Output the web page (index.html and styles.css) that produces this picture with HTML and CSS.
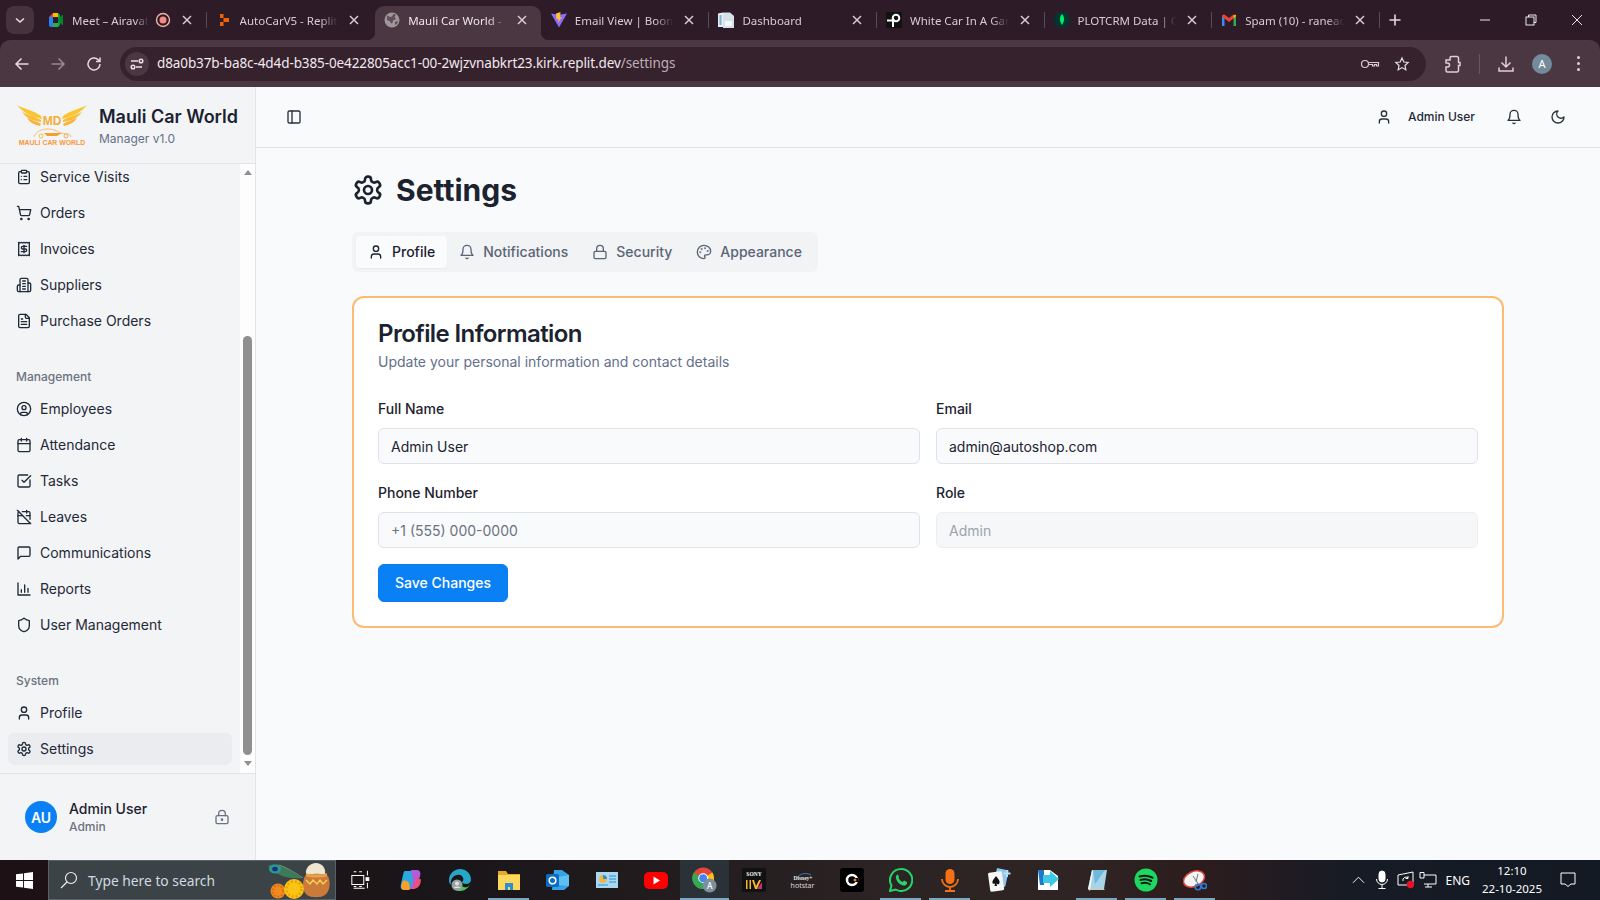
FILE: index.html
```html
<!DOCTYPE html>
<html lang="en">
<head>
<meta charset="utf-8">
<title>Mauli Car World - Settings</title>
<link rel="stylesheet" href="styles.css">
</head>
<body>
<svg class="defs" width="0" height="0" aria-hidden="true">
  <symbol id="i-clip" viewBox="0 0 24 24"><rect x="8" y="2" width="8" height="4" rx="1"/><path d="M16 4h2a2 2 0 0 1 2 2v14a2 2 0 0 1-2 2H6a2 2 0 0 1-2-2V6a2 2 0 0 1 2-2h2"/><path d="M12 11h4M12 16h4M8 11h.01M8 16h.01"/></symbol>
  <symbol id="i-cart" viewBox="0 0 24 24"><circle cx="8" cy="21" r="1"/><circle cx="19" cy="21" r="1"/><path d="M2.05 2.05h2l2.66 12.42a2 2 0 0 0 2 1.58h9.78a2 2 0 0 0 1.95-1.57l1.65-7.43H5.12"/></symbol>
  <symbol id="i-receipt" viewBox="0 0 24 24"><path d="M4 2v20l2-1 2 1 2-1 2 1 2-1 2 1 2-1 2 1V2l-2 1-2-1-2 1-2-1-2 1-2-1-2 1Z"/><path d="M16 8h-6a2 2 0 1 0 0 4h4a2 2 0 1 1 0 4H8"/><path d="M12 17.5v-11"/></symbol>
  <symbol id="i-building" viewBox="0 0 24 24"><path d="M6 22V4a2 2 0 0 1 2-2h8a2 2 0 0 1 2 2v18Z"/><path d="M6 12H4a2 2 0 0 0-2 2v6a2 2 0 0 0 2 2h2"/><path d="M18 9h2a2 2 0 0 1 2 2v9a2 2 0 0 1-2 2h-2"/><path d="M10 6h4M10 10h4M10 14h4M10 18h4"/></symbol>
  <symbol id="i-file" viewBox="0 0 24 24"><path d="M15 2H6a2 2 0 0 0-2 2v16a2 2 0 0 0 2 2h12a2 2 0 0 0 2-2V7Z"/><path d="M14 2v4a2 2 0 0 0 2 2h4"/><path d="M10 9H8M16 13H8M16 17H8"/></symbol>
  <symbol id="i-cuser" viewBox="0 0 24 24"><circle cx="12" cy="12" r="10"/><circle cx="12" cy="10" r="3"/><path d="M7 20.662V19a2 2 0 0 1 2-2h6a2 2 0 0 1 2 2v1.662"/></symbol>
  <symbol id="i-cal" viewBox="0 0 24 24"><path d="M8 2v4M16 2v4"/><rect x="3" y="4" width="18" height="18" rx="2"/><path d="M3 10h18"/></symbol>
  <symbol id="i-check" viewBox="0 0 24 24"><path d="M21 10.5V19a2 2 0 0 1-2 2H5a2 2 0 0 1-2-2V5a2 2 0 0 1 2-2h12.5"/><path d="m9 11 3 3L22 4"/></symbol>
  <symbol id="i-caloff" viewBox="0 0 24 24"><path d="M4.2 4.2A2 2 0 0 0 3 6v14a2 2 0 0 0 2 2h14a2 2 0 0 0 1.82-1.18"/><path d="M21 15.5V6a2 2 0 0 0-2-2H9.5"/><path d="M16 2v4M3 10h7M21 10h-5.5"/><path d="m2 2 20 20"/></symbol>
  <symbol id="i-msg" viewBox="0 0 24 24"><path d="M21 15a2 2 0 0 1-2 2H7l-4 4V5a2 2 0 0 1 2-2h14a2 2 0 0 1 2 2z"/></symbol>
  <symbol id="i-chart" viewBox="0 0 24 24"><path d="M3 3v18h18"/><path d="M18 17v-6M13 17V6M8 17v-4"/></symbol>
  <symbol id="i-shield" viewBox="0 0 24 24"><path d="M20 13c0 5-3.5 7.5-7.66 8.95a1 1 0 0 1-.67-.01C7.5 20.5 4 18 4 13V6a1 1 0 0 1 1-1c2 0 4.5-1.2 6.24-2.72a1.17 1.17 0 0 1 1.52 0C14.51 3.81 17 5 19 5a1 1 0 0 1 1 1z"/></symbol>
  <symbol id="i-user" viewBox="0 0 24 24"><path d="M19 21v-2a4 4 0 0 0-4-4H9a4 4 0 0 0-4 4v2"/><circle cx="12" cy="7" r="4"/></symbol>
  <symbol id="i-gear" viewBox="0 0 24 24"><path d="M12.22 2h-.44a2 2 0 0 0-2 2v.18a2 2 0 0 1-1 1.73l-.43.25a2 2 0 0 1-2 0l-.15-.08a2 2 0 0 0-2.73.73l-.22.38a2 2 0 0 0 .73 2.73l.15.1a2 2 0 0 1 1 1.72v.51a2 2 0 0 1-1 1.74l-.15.09a2 2 0 0 0-.73 2.73l.22.38a2 2 0 0 0 2.73.73l.15-.08a2 2 0 0 1 2 0l.43.25a2 2 0 0 1 1 1.73V20a2 2 0 0 0 2 2h.44a2 2 0 0 0 2-2v-.18a2 2 0 0 1 1-1.73l.43-.25a2 2 0 0 1 2 0l.15.08a2 2 0 0 0 2.73-.73l.22-.39a2 2 0 0 0-.73-2.73l-.15-.08a2 2 0 0 1-1-1.74v-.5a2 2 0 0 1 1-1.74l.15-.09a2 2 0 0 0 .73-2.73l-.22-.38a2 2 0 0 0-2.73-.73l-.15.08a2 2 0 0 1-2 0l-.43-.25a2 2 0 0 1-1-1.73V4a2 2 0 0 0-2-2z"/><circle cx="12" cy="12" r="3"/></symbol>
  <symbol id="i-lockk" viewBox="0 0 24 24"><circle cx="12" cy="16" r="1"/><rect x="3" y="10" width="18" height="12" rx="2"/><path d="M7 10V7a5 5 0 0 1 10 0v3"/></symbol>
  <symbol id="i-lock" viewBox="0 0 24 24"><rect x="3" y="11" width="18" height="11" rx="2"/><path d="M7 11V7a5 5 0 0 1 10 0v4"/></symbol>
  <symbol id="i-bell" viewBox="0 0 24 24"><path d="M6 8a6 6 0 0 1 12 0c0 7 3 9 3 9H3s3-2 3-9"/><path d="M10.3 21a1.94 1.94 0 0 0 3.4 0"/></symbol>
  <symbol id="i-moon" viewBox="0 0 24 24"><path d="M12 3a6 6 0 0 0 9 9 9 9 0 1 1-9-9Z"/></symbol>
  <symbol id="i-panel" viewBox="0 0 24 24"><rect x="3" y="3" width="18" height="18" rx="2"/><path d="M9 3v18"/></symbol>
  <symbol id="i-palette" viewBox="0 0 24 24"><circle cx="13.5" cy="6.5" r=".5"/><circle cx="17.5" cy="10.5" r=".5"/><circle cx="8.5" cy="7.5" r=".5"/><circle cx="6.5" cy="12.5" r=".5"/><path d="M12 2C6.5 2 2 6.5 2 12s4.5 10 10 10c.926 0 1.648-.746 1.648-1.688 0-.437-.18-.835-.437-1.125-.29-.289-.438-.652-.438-1.125a1.64 1.64 0 0 1 1.668-1.668h1.996c3.051 0 5.555-2.503 5.555-5.554C21.965 6.012 17.461 2 12 2z"/></symbol>
  <symbol id="i-x" viewBox="0 0 16 16"><path d="M4 4l8 8M12 4l-8 8"/></symbol>
</svg>

<div class="chrome">
  <div class="tabstrip">
    <button class="tab-search"><svg class="c-ico-sm" viewBox="0 0 16 16"><path d="M4 6.5l4 3.5 4-3.5"/></svg></button>
    <div class="tab">
      <svg class="fav" viewBox="0 0 16 16"><path d="M1 11h4v4H3a2 2 0 0 1-2-2z" fill="#1e88e5"/><path d="M1 5h4v6H1z" fill="#2684fc"/><path d="M5 1v4H1z" fill="#ea4335"/><path d="M5 1h5v4H5z" fill="#fbbc04"/><path d="M5 11h5v4H5z" fill="#34a853"/><path d="M5 5h5v6H5z" fill="#2d1b27"/><path d="M10 1v14l2-2V3z" fill="#00ac47"/><path d="M10 6.500l5-4v11l-5-4z" fill="#00832d"/></svg>
      <span class="tab-title short">Meet – Airavat Project</span>
      <svg class="rec" viewBox="0 0 16 16"><circle cx="8" cy="8" r="6.5" fill="none" stroke="#f3b2a8" stroke-width="1.4"/><circle cx="8" cy="8" r="3.5" fill="#f28b82"/></svg>
      <svg class="tab-x"><use href="#i-x"/></svg>
    </div>
    <span class="tab-sep on"></span>
    <div class="tab">
      <svg class="fav" viewBox="0 0 16 16"><path d="M4 2h3.5v4H4zM7.5 6H13v4H7.5zM4 10h3.5v4H4z" fill="#f26207"/></svg>
      <span class="tab-title">AutoCarV5 - Replit</span>
      <svg class="tab-x"><use href="#i-x"/></svg>
    </div>
    <span class="tab-sep"></span>
    <div class="tab active">
      <svg class="fav" viewBox="0 0 16 16"><circle cx="8" cy="8" r="7.5" fill="#a09699"/><path d="M3 3.5l3 1.5 2-.5L9.500 2 12 2.500 10.500 5 12 7 9 8.500 8 12 5.500 9 3 8z" fill="#5f4f58"/><path d="M11 10l3-1-1 3-2 1z" fill="#5f4f58"/></svg>
      <span class="tab-title">Mauli Car World - Replit</span>
      <svg class="tab-x"><use href="#i-x"/></svg>
    </div>
    <span class="tab-sep"></span>
    <div class="tab">
      <svg class="fav" viewBox="0 0 16 16"><path d="M0 1.500l8 1.200 8-1.200-8 14z" fill="#8f6cf5"/><path d="M9.500 0L5 1.500l.5 6 2-.5-.3 3.500L11 5l-2 .3z" fill="#ffc42e"/></svg>
      <span class="tab-title">Email View | Boomerang</span>
      <svg class="tab-x"><use href="#i-x"/></svg>
    </div>
    <span class="tab-sep on"></span>
    <div class="tab">
      <svg class="fav" viewBox="0 0 16 16"><path d="M0 1.500l5-1V15H0z" fill="#e8f0f6"/><path d="M5 .5h7l4 3.500V16H5z" fill="#d6e2ea"/><path d="M1.500 3h2v10h-2z" fill="#7fb0d0"/><path d="M7 9h7v5H7z" fill="#f5f8fa"/></svg>
      <span class="tab-title">Dashboard</span>
      <svg class="tab-x"><use href="#i-x"/></svg>
    </div>
    <span class="tab-sep on"></span>
    <div class="tab">
      <svg class="fav" viewBox="0 0 16 16"><rect width="16" height="16" fill="#111"/><path d="M1 8.500h8" stroke="#fff" stroke-width="2"/><circle cx="10" cy="6" r="3.300" fill="none" stroke="#fff" stroke-width="2"/><path d="M7 6v9" stroke="#fff" stroke-width="2"/></svg>
      <span class="tab-title">White Car In A Garage</span>
      <svg class="tab-x"><use href="#i-x"/></svg>
    </div>
    <span class="tab-sep on"></span>
    <div class="tab">
      <svg class="fav" viewBox="0 0 16 16"><circle cx="8" cy="8" r="8" fill="#023430"/><path d="M8 2c2.500 2.500 3 6.500 0 11-3-4.500-2.500-8.500 0-11z" fill="#00ed64"/></svg>
      <span class="tab-title">PLOTCRM Data | Cloud</span>
      <svg class="tab-x"><use href="#i-x"/></svg>
    </div>
    <span class="tab-sep on"></span>
    <div class="tab">
      <svg class="fav" viewBox="0 0 16 16"><path d="M1 14V4l2.500 2V14z" fill="#4285f4"/><path d="M12.500 14V6L15 4v10z" fill="#34a853"/><path d="M1 4.500C1 2.500 3 2 4 3l4 3 4-3c1-1 3-.5 3 1.500L8 10z" fill="#ea4335"/><path d="M12.500 6V3.500L15 2.800v1.700z" fill="#fbbc04"/></svg>
      <span class="tab-title">Spam (10) - raneadi</span>
      <svg class="tab-x"><use href="#i-x"/></svg>
    </div>
    <span class="tab-sep on"></span>
    <svg class="tab-plus" viewBox="0 0 16 16"><path d="M8 2.500v11M2.500 8h11"/></svg>
    <div class="win">
      <span class="win-btn"><svg viewBox="0 0 12 12"><path d="M1 6h10"/></svg></span>
      <span class="win-btn"><svg viewBox="0 0 12 12"><rect x="1" y="3" width="8" height="8"/><path d="M3.500 3V1H11v7.500H9"/></svg></span>
      <span class="win-btn"><svg viewBox="0 0 12 12"><path d="M1 1l10 10M11 1L1 11"/></svg></span>
    </div>
  </div>
  <div class="toolbar">
    <span class="tb-btn"><svg class="c-ico" viewBox="0 0 20 20"><path d="M16.500 10H4M9.500 4.500L4 10l5.500 5.500"/></svg></span>
    <span class="tb-btn dim"><svg class="c-ico" viewBox="0 0 20 20"><path d="M3.500 10H16M10.500 4.500L16 10l-5.500 5.500"/></svg></span>
    <span class="tb-btn"><svg class="c-ico" viewBox="0 0 20 20"><path d="M16 10a6 6 0 1 1-1.800-4.300L16 7.500M16 3.500v4h-4"/></svg></span>
    <div class="omni">
      <span class="site-btn"><svg class="c-ico-sm" viewBox="0 0 16 16"><path d="M2 5h7M13 11H7"/><circle cx="12" cy="5" r="1.800"/><circle cx="4" cy="11" r="1.800"/></svg></span>
      <span class="url">d8a0b37b-ba8c-4d4d-b385-0e422805acc1-00-2wjzvnabkrt23.kirk.replit.dev<span class="url-path">/settings</span></span>
      <svg class="c-ico omni-key" viewBox="0 0 20 20"><circle cx="5" cy="10" r="3.500"/><path d="M8.500 8.500h10v3.500h-2v-1.500h-2V12h-2v-1.500H8.500"/></svg>
      <svg class="c-ico omni-star" viewBox="0 0 20 20"><path d="M10 2.500l2.300 5 5.400.6-4 3.700 1.100 5.400L10 14.500l-4.800 2.700 1.100-5.400-4-3.700 5.400-.6z"/></svg>
    </div>
    <span class="tb-btn ext"><svg class="c-ico pink" viewBox="0 0 20 20"><path d="M3 6h4V4a1.500 1.500 0 0 1 1.500-1.500H14A1.500 1.500 0 0 1 15.500 4v4.500H17v3h-1.500v5A1.500 1.500 0 0 1 14 18H4.500A1.500 1.500 0 0 1 3 16.500v-3.500h1.500a2 2 0 0 0 0-4H3z"/></svg></span>
    <span class="tb-line"></span>
    <span class="tb-btn"><svg class="c-ico pink" viewBox="0 0 20 20"><path d="M10 2.500V13M5.500 8.500L10 13l4.500-4.500M3 13.500V17h14v-3.500"/></svg></span>
    <span class="tb-btn"><span class="prof">A</span></span>
    <span class="tb-btn"><span class="dots"><i></i><i></i><i></i></span></span>
  </div>
</div>

<div class="app">
  <aside class="sidebar">
    <div class="brand">
      <svg class="logo" viewBox="0 0 72 42">
        <g id="wing-l">
          <path d="M1 1C8 5 17 6 25 12l1 3C17 13 7 9 1 1z" fill="#fbc531"/>
          <path d="M6 8c6 3 12 4 19 8l0 2C17 17 10 14 6 8z" fill="#f9bd38"/>
          <path d="M11 14c5 2 9 3 14 6l-1 2c-5-1-10-3-13-8z" fill="#f8b43c"/>
        </g>
        <g transform="translate(72 0) scale(-1 1)">
          <path d="M1 1C8 5 17 6 25 12l1 3C17 13 7 9 1 1z" fill="#fbc531"/>
          <path d="M6 8c6 3 12 4 19 8l0 2C17 17 10 14 6 8z" fill="#f9bd38"/>
          <path d="M11 14c5 2 9 3 14 6l-1 2c-5-1-10-3-13-8z" fill="#f8b43c"/>
        </g>
        <text class="logo-md" x="36" y="21" text-anchor="middle">MD</text>
        <path d="M18 33c2-6 8-8 14-8 6 0 9 2 12 4l8 1c2 .5 3 2 3 3" fill="none" stroke="#f9b24e" stroke-width=".8"/>
        <path d="M28 29h18l-5 3H31z" fill="#f4a02e"/>
        <circle cx="25" cy="32" r="2" fill="none" stroke="#f4c04a" stroke-width="1"/>
        <circle cx="50" cy="32" r="2" fill="none" stroke="#f4a76a" stroke-width="1"/>
        <text class="logo-name" x="36" y="41" text-anchor="middle">MAULI CAR WORLD</text>
      </svg>
      <div class="brand-text">
        <div class="brand-title">Mauli Car World</div>
        <div class="brand-sub">Manager v1.0</div>
      </div>
    </div>
    <div class="side-scroll">
      <nav class="nav">
        <div class="nav-inner">
          <a class="nav-item"><svg class="ico"><use href="#i-clip"/></svg>Service Visits</a>
          <a class="nav-item"><svg class="ico"><use href="#i-cart"/></svg>Orders</a>
          <a class="nav-item"><svg class="ico"><use href="#i-receipt"/></svg>Invoices</a>
          <a class="nav-item"><svg class="ico"><use href="#i-building"/></svg>Suppliers</a>
          <a class="nav-item"><svg class="ico"><use href="#i-file"/></svg>Purchase Orders</a>
          <div class="nav-label">Management</div>
          <a class="nav-item"><svg class="ico"><use href="#i-cuser"/></svg>Employees</a>
          <a class="nav-item"><svg class="ico"><use href="#i-cal"/></svg>Attendance</a>
          <a class="nav-item"><svg class="ico"><use href="#i-check"/></svg>Tasks</a>
          <a class="nav-item"><svg class="ico"><use href="#i-caloff"/></svg>Leaves</a>
          <a class="nav-item"><svg class="ico"><use href="#i-msg"/></svg>Communications</a>
          <a class="nav-item"><svg class="ico"><use href="#i-chart"/></svg>Reports</a>
          <a class="nav-item"><svg class="ico"><use href="#i-shield"/></svg>User Management</a>
          <div class="nav-label">System</div>
          <a class="nav-item"><svg class="ico"><use href="#i-user"/></svg>Profile</a>
          <a class="nav-item active"><svg class="ico"><use href="#i-gear"/></svg>Settings</a>
        </div>
      </nav>
      <div class="sb">
        <span class="sb-up"></span>
        <span class="sb-thumb"></span>
        <span class="sb-down"></span>
      </div>
    </div>
    <div class="side-foot">
      <span class="avatar">AU</span>
      <div class="foot-text">
        <div class="foot-name">Admin User</div>
        <div class="foot-role">Admin</div>
      </div>
      <svg class="ico foot-lock"><use href="#i-lockk"/></svg>
    </div>
  </aside>

  <main class="main">
    <header class="topbar">
      <span class="icon-btn"><svg class="ico"><use href="#i-panel"/></svg></span>
      <div class="top-right">
        <svg class="ico"><use href="#i-user"/></svg>
        <span class="top-user">Admin User</span>
        <span class="icon-btn bell"><svg class="ico"><use href="#i-bell"/></svg></span>
        <span class="icon-btn"><svg class="ico"><use href="#i-moon"/></svg></span>
      </div>
    </header>
    <div class="content">
      <div class="page-title">
        <svg class="ico title-ico"><use href="#i-gear"/></svg>
        <h1>Settings</h1>
      </div>
      <div class="tabs">
        <span class="s-tab on"><svg class="ico"><use href="#i-user"/></svg>Profile</span>
        <span class="s-tab"><svg class="ico"><use href="#i-bell"/></svg>Notifications</span>
        <span class="s-tab"><svg class="ico"><use href="#i-lock"/></svg>Security</span>
        <span class="s-tab"><svg class="ico"><use href="#i-palette"/></svg>Appearance</span>
      </div>
      <section class="card">
        <h2>Profile Information</h2>
        <p class="card-desc">Update your personal information and contact details</p>
        <div class="form-grid">
          <label class="field"><span class="f-label">Full Name</span><input class="input" value="Admin User"></label>
          <label class="field"><span class="f-label">Email</span><input class="input" value="admin@autoshop.com"></label>
          <label class="field"><span class="f-label">Phone Number</span><input class="input" placeholder="+1 (555) 000-0000"></label>
          <label class="field"><span class="f-label">Role</span><input class="input off" placeholder="Admin" disabled></label>
        </div>
        <button class="save">Save Changes</button>
      </section>
    </div>
  </main>
</div>

<footer class="taskbar">
  <span class="start"><svg viewBox="0 0 18 18" width="17" height="17"><path d="M0 2.500l7.500-1V8.500H0zM8.500 1.300L18 0v8.500H8.500zM0 9.500h7.500v7L0 15.500zM8.500 9.500H18V18l-9.500-1.300z" fill="#fff"/></svg></span>
  <div class="search">
    <svg class="search-ico" viewBox="0 0 18 18"><circle cx="11" cy="7" r="5.500"/><path d="M7 11l-6 6"/></svg>
    <span class="search-text">Type here to search</span>
    <svg class="search-art" viewBox="0 0 68 38">
      <path d="M1 5c7-3 15-1 22 4 5 3 9 6 13 8-8 1-18 0-25-4C6 11 3 8 1 5z" fill="#3d7a5c"/>
      <path d="M12 4c6 2 14 6 24 13" fill="none" stroke="#8a9a8a" stroke-width=".7"/>
      <ellipse cx="8" cy="8" rx="6" ry="4.500" fill="#2a9a8a"/>
      <ellipse cx="8" cy="8" rx="2.800" ry="2.300" fill="#1a2c8a"/>
      <path d="M39 13c-1-6 4-11 10-11s10 5 9 11z" fill="#efe6cf"/>
      <path d="M38 15c3-3 20-3 23 0 3 6 2 15-3 19-4 3-14 3-18 0-5-4-5-13-2-19z" fill="#cc7a3a"/>
      <path d="M39 12c4 2 17 2 21 0v3c-4 2-17 2-21 0z" fill="#e8a347"/>
      <path d="M39 19l4 4 3-4 4 4 3-4 3 4 4-4" fill="none" stroke="#f7d35a" stroke-width="1.300"/>
      <circle cx="11" cy="30" r="7.500" fill="#f08a1d"/>
      <circle cx="11" cy="30" r="5.500" fill="none" stroke="#d96f10" stroke-width="2" stroke-dasharray="2 1.500"/>
      <circle cx="27" cy="28" r="10" fill="#fbc313"/>
      <circle cx="27" cy="28" r="7.500" fill="none" stroke="#e8a30c" stroke-width="2.500" stroke-dasharray="2 2"/>
    </svg>
  </div>
  <div class="tb-apps">
    <span class="slot tv"><svg viewBox="0 0 24 24" class="app-ico tv-ico"><path d="M4 3h3M10 3h3M4 19h3M10 19h3M4 21h12M2 7h13v10H2zM19 2v5M19 15v6" /><rect x="17.500" y="9.500" width="3" height="3" fill="#fff"/></svg></span>
    <span class="slot"><svg viewBox="0 0 24 24" class="app-ico"><path d="M6 3h8c3 0 3 3 2 6l-3 10c-1 2-3 3-5 3H5c-3 0-4-3-3-6L4 7c.4-2 1-4 2-4z" fill="#2aa8e0"/><path d="M12 2h6c3 0 4 3 3 6l-2 8c-1 3-3 5-6 5h-3c2-2 3-5 4-9z" fill="#b35cdb"/><path d="M4 13c2-1 5 0 6 2l1 6c-1 1-2 1-3 1H5c-3 0-4-4-1-9z" fill="#f5a12a"/><path d="M17 8c1 2 3 4 5 3 0 3-1 7-4 9-2 1-3 1-6 1 2-1 3-3 4-7z" fill="#ec4f7b"/></svg></span>
    <span class="slot"><svg viewBox="0 0 24 24" class="app-ico"><path d="M1 12C1 6 6 1 12 1c6 0 11 4 11 11 0 2-2 4-5 4-2 0-4-1-4-2 2-1 2-6-2-7-5-1-10 3-9 9 0 1-2 0-2-4z" fill="#27a6c8"/><path d="M23 12c0 6-5 11-11 11-4 0-7-2-8-5 3 3 8 4 10 0 3 3 9 1 9-6z" fill="#4cc35c"/><circle cx="9" cy="17" r="5.500" fill="#9aa0a4"/><circle cx="9" cy="15.500" r="2" fill="#e0e0e0"/><path d="M5.500 20c1-2 6-2 7 0z" fill="#e0e0e0"/></svg></span>
    <span class="slot under"><svg viewBox="0 0 24 24" class="app-ico"><path d="M1 3h8l2 3h12v16H1z" fill="#e6a92a"/><path d="M1 7h22v15H1z" fill="#fbd75b"/><path d="M8 15h8v7h-3v-3h-2v3H8z" fill="#2b8ed8"/></svg></span>
    <span class="slot"><svg viewBox="0 0 24 24" class="app-ico"><path d="M8 2h8l7 5v11l-5 4H6z" fill="#37a2e6"/><path d="M12 9l11-2v11l-11-1z" fill="#5ec0f0"/><rect x="0" y="6" width="13" height="13" rx="1.500" fill="#0a6cc4"/><circle cx="6.500" cy="12.500" r="3.300" fill="none" stroke="#fff" stroke-width="1.600"/></svg></span>
    <span class="slot"><svg viewBox="0 0 24 24" class="app-ico"><rect x="1" y="4" width="22" height="16" fill="#a9d8f2"/><circle cx="8" cy="11" r="4" fill="#f5b342"/><path d="M8 11V7a4 4 0 0 1 4 4z" fill="#2f8ed2"/><path d="M14 8h7M14 11h7M14 14h7M3 17h10" stroke="#2f8ed2" stroke-width="1.200"/></svg></span>
    <span class="slot"><svg viewBox="0 0 24 24" class="app-ico"><rect x="0" y="4" width="24" height="17" rx="5" fill="#f00"/><path d="M9.500 8.500l6.500 4-6.500 4z" fill="#fff"/></svg></span>
    <span class="slot cur">
      <svg viewBox="0 0 28 28" class="app-ico big"><circle cx="12" cy="12" r="11.500" fill="#e4453a"/><path d="M12 12L22 6a11.500 11.500 0 0 1-9 17.500z" fill="#fbc116"/><path d="M12 12l1 11.500A11.500 11.500 0 0 1 2 6z" fill="#34a853"/><circle cx="12" cy="12" r="5.300" fill="#fff"/><circle cx="12" cy="12" r="4.200" fill="#4285f4"/><circle cx="19" cy="20" r="7.500" fill="#7d8f9c"/><text class="chrome-a" x="19" y="23.500" text-anchor="middle">A</text></svg>
    </span>
    <span class="slot"><svg viewBox="0 0 24 24" class="app-ico"><rect width="24" height="24" rx="2" fill="#111"/><text class="sony" x="12" y="8" text-anchor="middle">SONY</text><path d="M4 21v-9h1.500v9zM7.500 21v-9H9v9zM10 12h2l2 6 3-6h2l-4 9h-2z" fill="#f5b52e"/><path d="M15 21l5-7v7z" fill="#c22f7f"/></svg></span>
    <span class="slot"><span class="hotstar"><svg viewBox="0 0 24 10" class="hot-top"><path d="M6 7c2-4 9-6 14-3" fill="none" stroke="#3a8fd8" stroke-width=".8"/><text class="disney" x="12" y="9" text-anchor="middle">Disney+</text></svg><span class="hot-text">hotstar</span></span></span>
    <span class="slot"><svg viewBox="0 0 24 24" class="app-ico"><rect width="24" height="24" rx="3" fill="#000"/><circle cx="12" cy="12" r="5" fill="none" stroke="#fff" stroke-width="2.500"/><path d="M12 10h6v4h-6z" fill="#000"/><circle cx="15" cy="12" r="1.500" fill="#f58220"/></svg></span>
    <span class="slot under"><svg viewBox="0 0 24 24" class="app-ico"><path d="M12 1a11 11 0 0 0-9.500 16.500L1 23l5.700-1.500A11 11 0 1 0 12 1z" fill="none" stroke="#25d366" stroke-width="2"/><path d="M8.500 6.500c-1 .5-2 2-1.500 4 1 3.500 3.500 6 7 7 2 .5 3.500-.5 4-2v-1.500l-3-1.500-1.300 1.500c-2-.7-3.500-2.300-4.200-4.200L10 8.700 8.800 6.500z" fill="#25d366"/></svg></span>
    <span class="slot under"><svg viewBox="0 0 24 24" class="app-ico"><rect x="7.500" y="1" width="9" height="15" rx="4.500" fill="#f47216"/><path d="M4 11a8 8 0 0 0 16 0M12 19v3M7 23h10" fill="none" stroke="#f47216" stroke-width="1.800"/></svg></span>
    <span class="slot"><svg viewBox="0 0 24 24" class="app-ico"><rect x="8" y="1" width="12" height="17" rx="1" fill="#8fc6ee" transform="rotate(12 14 10)"/><rect x="2" y="4" width="14" height="19" rx="1.500" fill="#f6f6f6" transform="rotate(-8 9 13)"/><path d="M9 8c2 3 5 5 3 8-1 1-2 0-2.500-.5l.5 2.500H7.500L8 15.500C7 16 6 16 5.500 15 5 12 8 10 9 8z" fill="#111"/><path d="M20 2v7M16.500 5.500h7" stroke="#b7e0f8" stroke-width="2"/></svg></span>
    <span class="slot"><svg viewBox="0 0 24 24" class="app-ico"><path d="M2 2h12l8 6v14H2z" fill="#fff"/><path d="M2 2h6v15H4z" fill="#1e78c8"/><path d="M7 7h7V3l9 8-9 8v-4H7z" fill="#3dc8e8"/></svg></span>
    <span class="slot under"><svg viewBox="0 0 24 24" class="app-ico"><path d="M7 2h15l-3 19H3z" fill="#a8d4e8"/><path d="M7 2l-4 19 2 2 3-20z" fill="#f2f6f8"/><path d="M8 2h12l-10 14z" fill="#6fb8dc"/><path d="M3 21l16 0 1 1H5z" fill="#d8c8a8"/></svg></span>
    <span class="slot under"><svg viewBox="0 0 24 24" class="app-ico"><circle cx="12" cy="12" r="11.500" fill="#1ed760"/><path d="M5.500 8.500c4-1.300 9-1 13 1.200M6.500 12c3.500-1 7.500-.7 10.700 1M7.500 15.300c3-.8 6-.5 8.500 1" fill="none" stroke="#0f1a12" stroke-width="2" stroke-linecap="round"/></svg></span>
    <span class="slot under"><svg viewBox="0 0 24 24" class="app-ico"><ellipse cx="11" cy="11" rx="11" ry="7.500" fill="#f4f4f4" stroke="#d8423a" stroke-width="1.500" transform="rotate(-25 11 11)"/><path d="M10 8l6 9M15 6l-2 8" stroke="#777" stroke-width="1"/><circle cx="15" cy="19" r="2.800" fill="none" stroke="#2b7fd4" stroke-width="1.600"/><circle cx="21" cy="18" r="2.500" fill="none" stroke="#2b7fd4" stroke-width="1.600"/></svg></span>
  </div>
  <div class="tray">
    <svg class="tr-ico chev" viewBox="0 0 14 8"><path d="M1 7l6-6 6 6"/></svg>
    <svg class="tr-ico tr-mic" viewBox="0 0 14 20"><rect x="4" y="1" width="6" height="11" rx="3" fill="#fff"/><path d="M1.500 9a5.500 5.500 0 0 0 11 0M7 15v3M3.500 18.500h7"/></svg>
    <span class="tr-cast"><svg class="tr-ico" viewBox="0 0 18 18"><path d="M1 4l15-3v13H1z"/><path d="M6 10a3 3 0 0 1 5-3M11 5v2.500H8.500"/><circle cx="13.500" cy="13.500" r="3.700" fill="#e81123" stroke="none"/></svg></span>
    <svg class="tr-ico tr-net" viewBox="0 0 18 18"><path d="M5 1.500H1V7h4zM5 4h12v9H5M9 13v3M6 16h7"/></svg>
    <span class="tr-lang">ENG</span>
    <div class="clock"><div>12:10</div><div>22-10-2025</div></div>
    <svg class="tr-ico tr-note" viewBox="0 0 18 18"><path d="M2 2h14v11h-4l-3 2.500L6 13H2z"/></svg>
  </div>
</footer>
</body>
</html>
```

FILE: styles.css
```css
* { box-sizing: border-box; }
html, body { margin: 0; padding: 0; height: 100%; }
body {
  width: 1600px;
  height: 900px;
  overflow: hidden;
  display: flex;
  flex-direction: column;
  font-family: "Inter", "Liberation Sans", sans-serif;
  color: #1c2230;
  background: #f9fafb;
}
.defs { display: none; }
.ico {
  width: 16px;
  height: 16px;
  flex: none;
  fill: none;
  stroke: currentColor;
  stroke-width: 2;
  stroke-linecap: round;
  stroke-linejoin: round;
}

/* browser chrome */
.chrome { background: #2d1b27; flex: none; font-family: "Noto Sans", "Open Sans", sans-serif; }
.tabstrip { height: 40px; display: flex; align-items: flex-end; padding-left: 6px; }
.tab-search {
  width: 28px;
  height: 28px;
  margin: 0 6px 6px 0;
  border: 0;
  padding: 0;
  border-radius: 8px;
  background: #45323d;
  display: flex;
  align-items: center;
  justify-content: center;
}
.c-ico-sm { width: 16px; height: 16px; fill: none; stroke: #eadfe5; stroke-width: 1.500; }
.tab {
  width: 165.6px;
  height: 34px;
  flex: none;
  display: flex;
  align-items: center;
  padding: 0 11px 6px 8px;
  position: relative;
  border-radius: 9px 9px 0 0;
  color: #d9cbd3;
  font-size: 11.500px;
}
.tab.active { background: #4b3742; color: #efe5ea; padding-left: 9px; }
.tab.active::before, .tab.active::after {
  content: "";
  position: absolute;
  bottom: 0;
  width: 8px;
  height: 8px;
}
.tab.active::before { left: -8px; background: radial-gradient(circle at 0 0, transparent 8px, #4b3742 8.500px); }
.tab.active::after { right: -8px; background: radial-gradient(circle at 100% 0, transparent 8px, #4b3742 8.500px); }
.fav { width: 16px; height: 16px; flex: none; margin-right: 8px; }
.tab-title {
  flex: 1;
  min-width: 0;
  white-space: nowrap;
  overflow: hidden;
  margin-right: 8px;
  -webkit-mask-image: linear-gradient(to right, #000 82%, transparent 100%);
  mask-image: linear-gradient(to right, #000 82%, transparent 100%);
}
.tab-title.short { margin-right: 6px; }
.rec { width: 16px; height: 16px; flex: none; margin-right: 8px; }
.tab-x { width: 16px; height: 16px; flex: none; fill: none; stroke: #d9cbd3; stroke-width: 1.500; }
.tab-sep { width: 2px; height: 34px; flex: none; display: flex; padding-bottom: 6px; position: relative; }
.tab-sep.on { height: 16px; margin-bottom: 12px; background: linear-gradient(to right, #5d4a55 50%, transparent 50%); }
.tab-plus { width: 16px; height: 16px; flex: none; margin: 0 0 12px 6.500px; fill: none; stroke: #e6d9e0; stroke-width: 1.600; }
.win { margin-left: auto; display: flex; align-self: stretch; }
.win-btn { width: 46px; display: flex; align-items: center; justify-content: center; padding-bottom: 0; }
.win-btn svg { width: 12px; height: 12px; fill: none; stroke: #fff; stroke-width: .9; }

.toolbar {
  height: 47px;
  background: #4b3742;
  border-radius: 10px 10px 0 0;
  display: flex;
  align-items: center;
  padding-left: 4px;
}
.tb-btn { width: 36px; height: 36px; flex: none; display: flex; align-items: center; justify-content: center; }
.tb-btn.dim { opacity: .5; }
.tb-btn.ext { margin-left: 9px; }
.c-ico { width: 20px; height: 20px; flex: none; fill: none; stroke: #e6dae0; stroke-width: 1.500; }
.c-ico.pink { stroke: #e4cdd9; }
.omni {
  width: 1306px;
  height: 34px;
  margin-left: 8px;
  border-radius: 17px;
  background: #35222d;
  display: flex;
  align-items: center;
  padding: 0 16px 0 5px;
  flex: none;
}
.site-btn {
  width: 24px;
  height: 24px;
  border-radius: 50%;
  background: #4b3742;
  display: flex;
  align-items: center;
  justify-content: center;
  flex: none;
}
.url { margin: 0 0 2px 8px; font-size: 13.500px; letter-spacing: -.1px; color: #f2e8ee; white-space: nowrap; }
.url-path { color: #bfaeb7; }
.omni-key { margin-left: auto; margin-right: 14px; stroke-width: 1.200; stroke: #d8cbd2; }
.omni-star { width: 16px; height: 16px; stroke: #e4dae0; }
.tb-line { width: 1px; height: 20px; background: #6a5560; margin: 0 8px 0 8px; flex: none; }
.prof {
  width: 20px;
  height: 20px;
  border-radius: 50%;
  background: #738b9a;
  color: #fff;
  font-size: 11px;
  display: flex;
  align-items: center;
  justify-content: center;
}
.dots { display: flex; flex-direction: column; gap: 3px; }
.dots i { display: block; width: 3px; height: 3px; border-radius: 50%; background: #e4cdd9; }

/* app */
.app { height: 773px; flex: none; display: flex; }
.sidebar {
  width: 256px;
  flex: none;
  background: #f3f4f6;
  border-right: 1px solid #e2e4e9;
  display: flex;
  flex-direction: column;
}
.brand {
  height: 77px;
  flex: none;
  border-bottom: 1px solid #e2e4e9;
  display: flex;
  align-items: center;
  padding: 0 0 0 16px;
  gap: 11px;
}
.logo { width: 72px; height: 42px; flex: none; }
.logo-md { font: 700 12px "Liberation Sans", sans-serif; fill: #f4ad3a; }
.logo-name { font: 700 6.900px "Liberation Sans", sans-serif; fill: #f7993b; }
.brand-text { padding-top: 2px; }
.brand-title { font-size: 18px; font-weight: 600; line-height: 24px; color: #1a2233; white-space: nowrap; }
.brand-sub { font-size: 12px; line-height: 16px; margin-top: 2px; color: #64708a; }
.side-scroll {
  height: 610px;
  flex: none;
  display: flex;
  border-bottom: 1px solid #e2e4e9;
}
.nav { width: 240px; flex: none; overflow: hidden; }
.nav-inner { margin-top: -3px; padding: 0 8px; display: flex; flex-direction: column; gap: 4px; }
.nav-item {
  height: 32px;
  display: flex;
  align-items: center;
  gap: 8px;
  padding: 0 8px 2px;
  border-radius: 6px;
  font-size: 14px;
  color: #1f2937;
}
.nav-item .ico { margin-top: 2px; }
.nav-item.active { background: #ebecf0; }
.nav-label {
  height: 32px;
  margin-top: 20px;
  margin-bottom: -4px;
  padding: 0 8px 2px;
  display: flex;
  align-items: center;
  font-size: 12px;
  font-weight: 500;
  color: #6b7280;
}
.sb {
  width: 15px;
  flex: none;
  background: #fdfdfd;
  display: flex;
  flex-direction: column;
  align-items: center;
  padding-top: 6px;
}
.sb-up { width: 0; height: 0; border: 4.500px solid transparent; border-top: 0; border-bottom: 5px solid #8f8f8f; }
.sb-thumb { width: 9px; height: 419px; margin-top: 161px; border-radius: 5px; background: #8f8f8f; }
.sb-down { width: 0; height: 0; margin-top: 6px; border: 4.500px solid transparent; border-bottom: 0; border-top: 5px solid #8f8f8f; }
.side-foot {
  flex: 1;
  display: flex;
  align-items: center;
  padding: 0 25px;
  gap: 12px;
}
.avatar {
  width: 32px;
  height: 32px;
  flex: none;
  border-radius: 50%;
  background: #0a80f5;
  color: #fff;
  font-size: 14px;
  font-weight: 600;
  display: flex;
  align-items: center;
  justify-content: center;
}
.foot-name { font-size: 14px; font-weight: 500; line-height: 20px; color: #1c2230; }
.foot-role { font-size: 12px; font-weight: 500; line-height: 16px; color: #6b7280; }
.foot-lock { margin-left: auto; color: #6b7280; }

.main { flex: 1; min-width: 0; display: flex; flex-direction: column; background: #f9fafc; }
.topbar {
  height: 61px;
  flex: none;
  border-bottom: 1px solid #e2e4e9;
  display: flex;
  align-items: center;
  justify-content: space-between;
  padding: 0 26px 0 22px;
  color: #2a303c;
}
.icon-btn { width: 32px; height: 32px; display: flex; align-items: center; justify-content: center; flex: none; }
.top-right { display: flex; align-items: center; }
.top-user { font-size: 12px; font-weight: 500; margin: 0 0 2px 16px; color: #1f2937; }
.bell { margin: 0 12px 0 23px; }
.content { width: 1152px; margin: 0 auto; padding-top: 24px; }
.page-title { display: flex; align-items: center; gap: 12px; height: 36px; }
.title-ico { width: 32px; height: 32px; color: #1c2230; }
h1 { margin: 0; font-size: 30px; line-height: 36px; font-weight: 700; color: #1c2230; }
.tabs {
  margin-top: 24px;
  width: max-content;
  height: 40px;
  padding: 4px;
  border-radius: 6px;
  background: #f1f3f5;
  display: flex;
}
.s-tab {
  display: flex;
  align-items: center;
  gap: 8px;
  padding: 0 12px 2px;
  border-radius: 4px;
  font-size: 14px;
  font-weight: 500;
  color: #5b6577;
}
.s-tab .ico { margin-top: 2px; }
.s-tab.on { background: #fafbfc; color: #1c2230; box-shadow: 0 1px 2px rgba(0,0,0,.04); }
.card {
  margin-top: 24px;
  border: 2px solid #fdba74;
  border-radius: 12px;
  background: #fff;
  padding: 24px;
}
h2 { margin: 0; font-size: 24px; line-height: 24px; font-weight: 600; color: #1c2230; letter-spacing: -.6px; }
.card-desc { margin: 6px 0 0; font-size: 14px; line-height: 20px; color: #64708a; }
.form-grid { margin-top: 27px; display: grid; grid-template-columns: 1fr 1fr; column-gap: 16px; row-gap: 19px; }
.field { display: block; }
.f-label { display: block; font-size: 14px; font-weight: 500; line-height: 20px; margin-bottom: 9px; color: #1c2230; }
.input {
  display: block;
  width: 100%;
  height: 36px;
  padding: 0 12px;
  border: 1px solid #e0e2e8;
  border-radius: 6px;
  background: #f9fafb;
  font: 400 14px "Inter", sans-serif;
  color: #1c2230;
  outline: 0;
}
.input::placeholder { color: #6b7280; opacity: 1; }
.input.off { background: #f6f7f8; border-color: #eceef1; }
.input.off::placeholder { color: #9ca3af; }
.save {
  display: block;
  margin-top: 16px;
  width: 130px;
  height: 38px;
  border: 1px solid #0a7cf0;
  border-radius: 6px;
  background: #0a80f5;
  color: #fff;
  font: 500 14px "Inter", sans-serif;
  padding: 0 0 2px;
}

/* taskbar */
.taskbar {
  height: 40px;
  flex: none;
  display: flex;
  align-items: stretch;
  background: linear-gradient(to right, #1e1116 0, #1a1619 30%, #2b2324 55%, #2f2423 68%, #2c1c1e 75%, #161b25 85%, #131a24 100%);
  color: #fff;
  font-family: "Noto Sans", "Open Sans", sans-serif;
}
.start { width: 48px; flex: none; display: flex; align-items: center; justify-content: center; }
.search {
  width: 288px;
  flex: none;
  display: flex;
  align-items: center;
  background: #3c4346;
  border: 1px solid #596266;
  padding-left: 11px;
}
.search-ico { width: 18px; height: 18px; flex: none; fill: none; stroke: #e8ecee; stroke-width: 1.200; }
.search-text { margin-left: 10px; font-size: 13.800px; color: #cfdae2; white-space: nowrap; }
.search-art { width: 68px; height: 38px; margin-left: auto; flex: none; }
.tb-apps { display: flex; margin-left: 1px; }
.slot {
  width: 49px;
  flex: none;
  display: flex;
  align-items: center;
  justify-content: center;
  position: relative;
}
.slot.under::after {
  content: "";
  position: absolute;
  left: 4px;
  right: 4px;
  bottom: 0;
  height: 2px;
  background: #7aa7c2;
}
.slot.cur { background: #2a3238; box-shadow: inset 0 -2px 0 #7aa7c2; }
.app-ico { width: 24px; height: 24px; flex: none; }
.app-ico.big { width: 26px; height: 26px; margin-left: 1px; }
.tv-ico { fill: none; stroke: #fff; stroke-width: 1.100; width: 22px; height: 22px; margin-right: 2px; }
.chrome-a { font: 500 9px "Noto Sans", sans-serif; fill: #fff; }
.sony { font: 700 5.500px "Liberation Serif", serif; fill: #fff; }
.hotstar { display: flex; flex-direction: column; align-items: center; width: 28px; }
.hot-top { width: 24px; height: 10px; }
.disney { font: 700 5.500px "Liberation Serif", serif; fill: #e8e8e8; }
.hot-text { font-size: 7px; line-height: 9px; color: #d8d8d8; }
.tray { margin-left: auto; display: flex; align-items: center; padding-right: 23px; }
.tr-ico { fill: none; stroke: #fff; stroke-width: 1; flex: none; display: block; }
.chev { width: 13px; height: 8px; }
.tr-mic { width: 14px; height: 20px; margin-left: 10px; }
.tr-cast { margin-left: 8px; }
.tr-cast .tr-ico { width: 18px; height: 18px; }
.tr-net { width: 18px; height: 18px; margin-left: 4px; }
.tr-lang { margin-left: 8px; font-size: 12px; }
.clock { width: 80px; margin-left: 2px; text-align: center; font-size: 11.500px; line-height: 18px; }
.tr-note { width: 18px; height: 18px; margin-left: 7px; }
```
